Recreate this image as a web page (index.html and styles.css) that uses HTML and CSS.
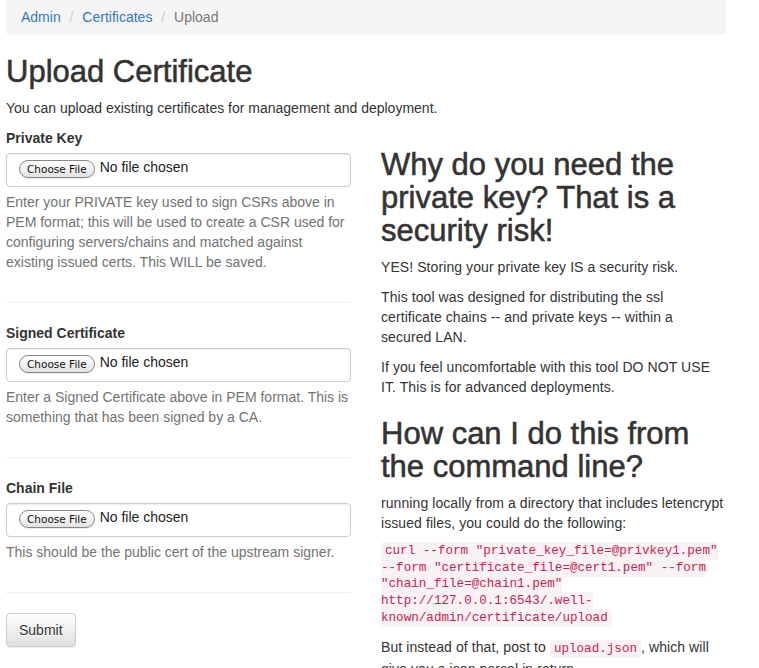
FILE: index.html
```html
<!DOCTYPE html>
<html lang="en">
<head>
<meta charset="utf-8">
<title>Upload Certificate</title>
<link rel="stylesheet" href="styles.css">
</head>
<body>
<div class="page">
  <ol class="breadcrumb">
    <li><a href="#">Admin</a></li>
    <li><a href="#">Certificates</a></li>
    <li class="active">Upload</li>
  </ol>
  <h1>Upload Certificate</h1>
  <p>You can upload existing certificates for management and deployment.</p>
  <div class="row">
    <form class="form-col">
      <div class="form-group">
        <label class="field-label">Private Key</label>
        <div class="file-input"><span class="file-btn">Choose File</span><span class="file-name">No file chosen</span></div>
        <p class="help-block">Enter your PRIVATE key used to sign CSRs above in PEM format; this will be used to create a CSR used for configuring servers/chains and matched against existing issued certs. This WILL be saved.</p>
      </div>
      <hr class="sep">
      <div class="form-group">
        <label class="field-label">Signed Certificate</label>
        <div class="file-input"><span class="file-btn">Choose File</span><span class="file-name">No file chosen</span></div>
        <p class="help-block">Enter a Signed Certificate above in PEM format. This is something that has been signed by a CA.</p>
      </div>
      <hr class="sep">
      <div class="form-group">
        <label class="field-label">Chain File</label>
        <div class="file-input"><span class="file-btn">Choose File</span><span class="file-name">No file chosen</span></div>
        <p class="help-block">This should be the public cert of the upstream signer.</p>
      </div>
      <hr class="sep">
      <div class="actions"><button type="button" class="btn">Submit</button></div>
    </form>
    <div class="info-col">
      <h2>Why do you need the private key? That is a security risk!</h2>
      <p>YES! Storing your private key IS a security risk.</p>
      <p>This tool was designed for distributing the ssl certificate chains -- and private keys -- within a secured LAN.</p>
      <p>If you feel uncomfortable with this tool DO NOT USE IT. This is for advanced deployments.</p>
      <h2>How can I do this from the command line?</h2>
      <p>running locally from a directory that includes letencrypt issued files, you could do the following:</p>
      <div class="snippet"><code>curl --form "private_key_file=@privkey1.pem" --form "certificate_file=@cert1.pem" --form "chain_file=@chain1.pem" http://127.0.0.1:6543/.well-known/admin/certificate/upload</code></div>
      <p>But instead of that, post to <code>upload.json</code>, which will give you a json parcel in return.</p>
    </div>
  </div>
</div>
</body>
</html>
```

FILE: styles.css
```css
html, body {
  margin: 0;
  padding: 0;
  background: #fff;
}
body {
  font-family: "Liberation Sans", Arial, sans-serif;
  font-size: 14px;
  line-height: 20px;
  color: #333;
}
.page {
  width: 720px;
  margin-left: 6px;
}
p {
  margin: 0 0 10px;
}
a {
  color: #337ab7;
  text-decoration: none;
}
.breadcrumb {
  list-style: none;
  margin: 0 0 20px;
  padding: 7px 15px 8px;
  background: #f5f5f5;
  border-radius: 0 0 4px 4px;
}
.breadcrumb li {
  display: inline-block;
}
.breadcrumb li + li::before {
  content: "/\00a0";
  padding: 0 5px;
  color: #ccc;
}
.breadcrumb .active {
  color: #777;
}
h1, h2 {
  font-family: "Liberation Sans", Arial, sans-serif;
  font-weight: 500;
  font-size: 31px;
  line-height: 33px;
  color: #333;
  -webkit-text-stroke: 0.55px #333;
}
h1 {
  margin: 20px 0 10px;
}
h2 {
  margin: 20px 0 10px;
}
.row {
  display: flex;
  gap: 30px;
  align-items: flex-start;
}
.form-col {
  width: 345px;
  display: flex;
  flex-direction: column;
}
.form-group {
  display: flex;
  flex-direction: column;
  align-items: flex-start;
}
.field-label {
  font-weight: bold;
  margin-bottom: 5px;
}
.file-input {
  box-sizing: border-box;
  width: 100%;
  height: 34px;
  padding: 6px 12px;
  border: 1px solid #ccc;
  border-radius: 4px;
  box-shadow: inset 0 1px 1px rgba(0, 0, 0, 0.075);
  display: flex;
  align-items: flex-start;
  background: #fff;
}
.file-btn {
  box-sizing: border-box;
  height: 18px;
  padding: 0 7px;
  border: 1px solid #888;
  border-radius: 9px;
  background: linear-gradient(to bottom, #ffffff 0%, #f2f2f2 50%, #e2e2e2 100%);
  box-shadow: 0 1px 0 rgba(0, 0, 0, 0.08);
  font-family: "DejaVu Sans", sans-serif;
  font-size: 10.5px;
  line-height: 16px;
  color: #111;
  margin-right: 5px;
  white-space: nowrap;
}
.file-name {
  line-height: 15px;
  color: #222;
  white-space: nowrap;
}
.help-block {
  margin: 5px 0 10px;
  color: #737373;
}
.sep {
  width: 100%;
  margin: 20px 0;
  border: 0;
  border-top: 1px solid #eee;
  height: 0;
}
.actions {
  display: flex;
}
.btn {
  font-family: "Liberation Sans", Arial, sans-serif;
  font-size: 14px;
  line-height: 20px;
  color: #333;
  padding: 6px 12px;
  border: 1px solid #ccc;
  border-radius: 4px;
  background: linear-gradient(to bottom, #fff 0%, #e0e0e0 100%);
  text-shadow: 0 1px 0 #fff;
  box-shadow: inset 0 1px 0 rgba(255, 255, 255, 0.15), 0 1px 1px rgba(0, 0, 0, 0.075);
}
.info-col {
  width: 344px;
}
.info-col p {
  letter-spacing: 0.08px;
}
code {
  font-family: "Liberation Mono", "DejaVu Sans Mono", monospace;
  font-size: 12.6px;
  letter-spacing: 0;
  padding: 2px 4px;
  color: #c7254e;
  background: #f9f2f4;
  border-radius: 4px;
}
.snippet {
  font-family: "Liberation Mono", "DejaVu Sans Mono", monospace;
  font-size: 12.6px;
  line-height: 16.7px;
  margin-bottom: 10px;
}
.snippet code {
  line-height: 16.7px;
}
```
